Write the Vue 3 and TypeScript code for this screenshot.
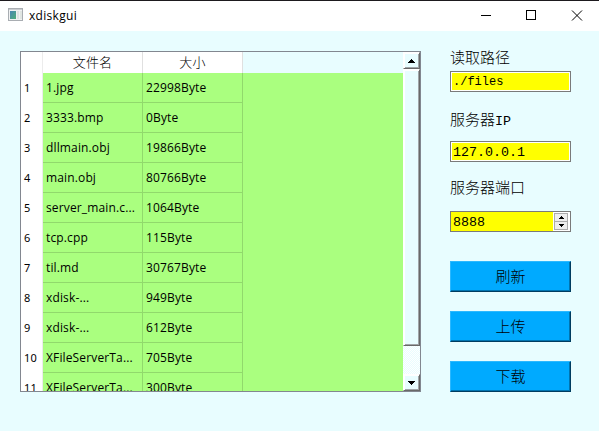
<script setup lang="ts">
interface FileRow {
  name: string
  size: string
}

const files: FileRow[] = [
  { name: '1.jpg', size: '22998Byte' },
  { name: '3333.bmp', size: '0Byte' },
  { name: 'dllmain.obj', size: '19866Byte' },
  { name: 'main.obj', size: '80766Byte' },
  { name: 'server_main.c...', size: '1064Byte' },
  { name: 'tcp.cpp', size: '115Byte' },
  { name: 'til.md', size: '30767Byte' },
  { name: 'xdisk-...', size: '949Byte' },
  { name: 'xdisk-...', size: '612Byte' },
  { name: 'XFileServerTa...', size: '705Byte' },
  { name: 'XFileServerTa...', size: '300Byte' },
]
const actions: string[] = ['刷新', '上传', '下载']
</script>

<template>
  <div class="window">
    <header class="titlebar">
      <svg class="app-icon" width="16" height="14" viewBox="0 0 16 14">
        <defs>
          <linearGradient id="pane" x1="0" y1="0" x2="1" y2="1">
            <stop offset="0" stop-color="#4a86b4" />
            <stop offset="1" stop-color="#4fae78" />
          </linearGradient>
        </defs>
        <rect x="0.5" y="0.5" width="14" height="12" fill="#f0f1f2" stroke="#a9adb2" />
        <rect x="1" y="1" width="13" height="1" fill="#c9ccd0" />
        <rect x="2" y="3" width="6" height="8" fill="url(#pane)" />
        <rect x="9" y="3" width="2" height="8" fill="#dfe2e2" />
        <rect x="12" y="3" width="2" height="8" fill="#e0e5e2" />
      </svg>
      <span class="title">xdiskgui</span>
      <svg class="controls" width="120" height="28" viewBox="0 0 120 28" fill="none" stroke="#000">
        <path d="M2 12.5h10M47.5 7.5h9v9h-9z" shape-rendering="crispEdges" />
        <path d="M93 7.5l10 10M103 7.5l-10 10" />
      </svg>
    </header>

    <main class="content">
      <section class="table">
        <div class="grid">
          <div class="row head">
            <div class="num"></div>
            <div class="cell">文件名</div>
            <div class="cell">大小</div>
            <div class="rest"></div>
          </div>
          <div v-for="(file, i) in files" :key="i" class="row">
            <div class="num">{{ i + 1 }}</div>
            <div class="cell">{{ file.name }}</div>
            <div class="cell">{{ file.size }}</div>
          </div>
        </div>
        <div class="scrollbar">
          <div class="arrow">
            <svg width="7" height="4" viewBox="0 0 7 4" shape-rendering="crispEdges"><path d="M3 0h1v1h1v1h1v1h1v1H0V3h1V2h1V1h1z" /></svg>
          </div>
          <div class="thumb"></div>
          <div class="track"></div>
          <div class="arrow">
            <svg width="7" height="4" viewBox="0 0 7 4" shape-rendering="crispEdges"><path d="M0 0h7v1H6v1H5v1H4v1H3V3H2V2H1V1H0z" /></svg>
          </div>
        </div>
      </section>

      <aside class="panel">
        <label class="label">读取路径</label>
        <div class="field small">./files</div>
        <label class="label ip">服务器<span class="latin">IP</span></label>
        <div class="field">127.0.0.1</div>
        <label class="label port">服务器端口</label>
        <div class="field spin">
          <span>8888</span>
          <div class="steps">
            <div class="step"><svg width="5" height="3" viewBox="0 0 5 3" shape-rendering="crispEdges"><path d="M2 0h1v1h1v1h1v1H0V2h1V1h1z" /></svg></div>
            <div class="step"><svg width="5" height="3" viewBox="0 0 5 3" shape-rendering="crispEdges"><path d="M0 0h5v1H4v1H3v1H2V2H1V1H0z" /></svg></div>
          </div>
        </div>
        <div class="actions">
          <button v-for="action in actions" :key="action" class="action">{{ action }}</button>
        </div>
      </aside>
    </main>
  </div>
</template>

<style>
body {
  margin: 0;
  overflow: hidden;
}
</style>

<style scoped>
* {
  box-sizing: border-box;
}
.window {
  width: 599px;
  height: 431px;
  background: #e8fdff;
  color: #000;
  overflow: hidden;
}
.titlebar {
  height: 31px;
  border-top: 1px solid #1d1a1e;
  background: #fff;
  display: flex;
  align-items: flex-start;
  padding-left: 8px;
}
.app-icon {
  margin-top: 7px;
}
.title {
  margin: 6px 0 0 5px;
  font: 12px/18px "Open Sans", sans-serif;
  letter-spacing: 0.3px;
}
.controls {
  margin: 2px 0 0 auto;
}
.content {
  display: flex;
  padding: 20px 0 0 20px;
  gap: 29px;
  align-items: flex-start;
}
.table {
  width: 401px;
  height: 341px;
  border: 1px solid #828790;
  display: flex;
  overflow: hidden;
}
.grid {
  width: 382px;
  height: 339px;
  overflow: hidden;
  background: #aaff7f;
}
.row {
  display: flex;
  height: 30px;
  font: 12px/29px "Open Sans", "Noto Sans CJK SC", sans-serif;
  letter-spacing: 0.14px;
}
.num {
  width: 22px;
  flex: none;
  padding: 0 0 0 3px;
  background: #fff;
  border-right: 1px solid #ececec;
  font-family: "Noto Sans", sans-serif;
  font-size: 11px;
}
.cell {
  width: 100px;
  flex: none;
  padding-left: 3px;
  border-right: 1px solid #91d96c;
  border-bottom: 1px solid #91d96c;
  white-space: nowrap;
  overflow: hidden;
}
.head {
  height: 21px;
}
.head .cell {
  background: #fff;
  border-bottom: 0;
  border-right-color: #e0e0e0;
  padding: 0;
  text-align: center;
  font: 300 13px/20px "Noto Sans CJK SC", sans-serif;
}
.rest {
  flex: 1;
  background: #e8fdff;
}
.scrollbar {
  width: 17px;
  display: flex;
  flex-direction: column;
}
.arrow,
.thumb {
  border: 1px solid #fff;
  border-right-color: #696969;
  border-bottom-color: #696969;
  box-shadow: inset 1px 1px #fff, inset -1px -1px #a0a5a8;
  background: #e8fdff;
}
.arrow {
  height: 17px;
  flex: none;
  display: flex;
  align-items: center;
  justify-content: center;
}
.thumb {
  height: 277px;
}
.track {
  flex: 1;
  background: repeating-conic-gradient(#fff 0 25%, #e8fdff 0 50%) 0 0 / 2px 2px;
}
.panel {
  width: 121px;
  display: flex;
  flex-direction: column;
}
.label {
  height: 20px;
  margin-top: -4px;
  font: 15px/20px "Noto Sans CJK SC", sans-serif;
  font-weight: 300;
  white-space: nowrap;
}
.latin {
  font: 13.33px "Liberation Mono", monospace;
}
.field {
  height: 21px;
  border: 1px solid #7a7a7a;
  box-shadow: inset 0 0 0 1px #fff;
  background: #ff0;
  padding-left: 2px;
  font: 13.33px/21px "Liberation Mono", monospace;
}
.small {
  margin-top: 4px;
  font-size: 12px;
}
.label.ip {
  margin-top: 17px;
  margin-bottom: 12px;
}
.label.port {
  margin-top: 15px;
  margin-bottom: 14px;
}
.spin {
  display: flex;
  justify-content: space-between;
  box-shadow: none;
}
.steps {
  width: 17px;
  padding: 1px;
  background: #fff;
}
.step {
  height: 9px;
  width: 14px;
  border: 1px solid #acacac;
  background: #eee;
  display: flex;
  align-items: center;
  justify-content: center;
}
.step + .step {
  margin-top: -1px;
}
.actions {
  display: grid;
  gap: 19px;
  margin-top: 29px;
}
.action {
  height: 31px;
  padding: 0 0 2px;
  border: 1px solid #2bb8ff;
  border-right-color: #003c60;
  border-bottom-color: #003c60;
  box-shadow: inset -1px -1px #0074b0;
  background: #0af;
  color: #000;
  font: 15px/27px "Noto Sans CJK SC", sans-serif;
  font-weight: 300;
}
</style>
